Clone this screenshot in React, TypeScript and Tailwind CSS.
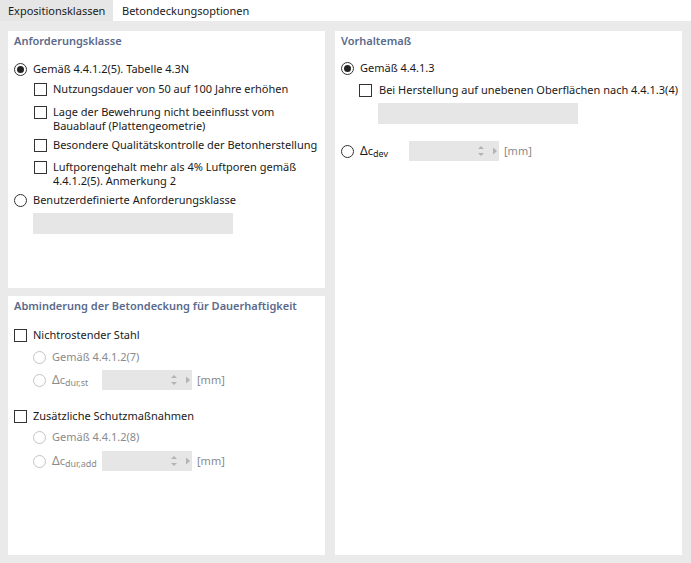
import React from "react";

const FONT = { fontFamily: '"Noto Sans", "Open Sans", sans-serif' };

function Radio({ checked = false, disabled = false }: { checked?: boolean; disabled?: boolean }) {
  return (
    <span
      className={`relative flex shrink-0 items-center justify-center w-[13px] h-[13px] rounded-full border bg-white ${
        disabled ? "border-[#c4c4c4]" : "border-[#333333]"
      }`}
    >
      {checked && <span className="w-[7px] h-[7px] rounded-full bg-[#222222]" />}
    </span>
  );
}

function Check({ disabled = false }: { disabled?: boolean }) {
  return (
    <span
      className={`block shrink-0 w-[13px] h-[13px] border bg-white ${
        disabled ? "border-[#c4c4c4]" : "border-[#333333]"
      }`}
    />
  );
}

function Spin({ w = 90 }: { w?: number }) {
  return (
    <div className="relative h-[20px] bg-[#e6e6e6] shrink-0" style={{ width: w }}>
      <svg className="absolute left-[68px] top-[4px]" width="8" height="12" viewBox="0 0 8 12">
        <path d="M1 4 L4 1 L7 4 Z" fill="#b3b3b3" />
        <path d="M1 8 L4 11 L7 8 Z" fill="#b3b3b3" />
      </svg>
      <svg className="absolute left-[83px] top-[6px]" width="6" height="8" viewBox="0 0 6 8">
        <path d="M1 0.5 L5 4 L1 7.5 Z" fill="#b3b3b3" />
      </svg>
    </div>
  );
}

function Delta({ sub, disabled = false }: { sub: string; disabled?: boolean }) {
  return (
    <span className={`inline-flex items-baseline ${disabled ? "text-[#8a8a8a]" : "text-[#1a1a1a]"}`}>
      <span className="text-[12px]">Δ</span>
      <span className="text-[11px]">c</span>
      <span className="text-[9px] relative top-[2px]">{sub}</span>
    </span>
  );
}

function Title({ children }: { children: React.ReactNode }) {
  return (
    <div className="h-[20px] flex items-center text-[11px] font-semibold text-[#5a6a8c] pl-[6px]">
      {children}
    </div>
  );
}

export default function App() {
  return (
    <div className="w-[691px] h-[563px] bg-white flex flex-col text-[11px] leading-[14px] text-[#1a1a1a]" style={FONT}>
      {/* Tabs */}
      <div className="h-[21px] flex shrink-0">
        <div className="w-[113px] bg-[#e6e6e6] flex items-center pl-[8px] text-[11px] text-[#1a1a1a]">
          Expositionsklassen
        </div>
        <div className="w-[145px] bg-white flex items-center pl-[9px] text-[11px] text-[#1a1a1a]">
          Betondeckungsoptionen
        </div>
      </div>

      {/* Body */}
      <div className="flex-1 bg-[#eaeaea] flex gap-[10px] pl-[8px] pr-[9px] pt-[10px] pb-[8px]">
        {/* Left column */}
        <div className="w-[317px] flex flex-col gap-[8px]">
          {/* Anforderungsklasse */}
          <div className="h-[257px] bg-white flex flex-col">
            <Title>Anforderungsklasse</Title>
            <div className="flex items-start gap-[6px] pl-[6px] mt-[11px]">
              <span className="mt-[1px] flex"><Radio checked /></span>
              <span>Gemäß 4.4.1.2(5). Tabelle 4.3N</span>
            </div>
            <div className="flex items-start gap-[6px] pl-[26px] mt-[6px]">
              <span className="mt-[1px] flex"><Check /></span>
              <span>Nutzungsdauer von 50 auf 100 Jahre erhöhen</span>
            </div>
            <div className="flex items-start gap-[6px] pl-[26px] mt-[9px]">
              <span className="mt-[1px] flex"><Check /></span>
              <span>
                Lage der Bewehrung nicht beeinflusst vom
                <br />
                Bauablauf (Plattengeometrie)
              </span>
            </div>
            <div className="flex items-start gap-[6px] pl-[26px] mt-[5px]">
              <span className="mt-[1px] flex"><Check /></span>
              <span>Besondere Qualitätskontrolle der Betonherstellung</span>
            </div>
            <div className="flex items-start gap-[6px] pl-[26px] mt-[8px]">
              <span className="mt-[1px] flex"><Check /></span>
              <span>
                Luftporengehalt mehr als 4% Luftporen gemäß
                <br />
                4.4.1.2(5). Anmerkung 2
              </span>
            </div>
            <div className="flex items-start gap-[6px] pl-[6px] mt-[5px]">
              <span className="mt-[1px] flex"><Radio /></span>
              <span>Benutzerdefinierte Anforderungsklasse</span>
            </div>
            <div className="ml-[25px] mt-[6px] w-[200px] h-[21px] bg-[#e6e6e6]" />
          </div>

          {/* Abminderung */}
          <div className="flex-1 bg-white flex flex-col">
            <Title>Abminderung der Betondeckung für Dauerhaftigkeit</Title>
            <div className="h-[20px] mt-[9px] flex items-center gap-[6px] pl-[6px]">
              <Check />
              <span>Nichtrostender Stahl</span>
            </div>
            <div className="h-[20px] mt-[2px] flex items-center gap-[6px] pl-[25px] text-[#8a8a8a]">
              <Radio disabled />
              <span>Gemäß 4.4.1.2(7)</span>
            </div>
            <div className="h-[20px] mt-[3px] flex items-center pl-[25px]">
              <Radio disabled />
              <span className="ml-[6px] w-[50px]"><Delta sub="dur,st" disabled /></span>
              <Spin />
              <span className="ml-[5px] text-[#8a8a8a]">[mm]</span>
            </div>
            <div className="h-[20px] mt-[16px] flex items-center gap-[6px] pl-[6px]">
              <Check />
              <span>Zusätzliche Schutzmaßnahmen</span>
            </div>
            <div className="h-[20px] mt-[1px] flex items-center gap-[6px] pl-[25px] text-[#8a8a8a]">
              <Radio disabled />
              <span>Gemäß 4.4.1.2(8)</span>
            </div>
            <div className="h-[20px] mt-[4px] flex items-center pl-[25px]">
              <Radio disabled />
              <span className="ml-[6px] w-[50px]"><Delta sub="dur,add" disabled /></span>
              <Spin />
              <span className="ml-[5px] text-[#8a8a8a]">[mm]</span>
            </div>
          </div>
        </div>

        {/* Right panel: Vorhaltemaß */}
        <div className="flex-1 bg-white flex flex-col">
          <Title>Vorhaltemaß</Title>
          <div className="h-[20px] mt-[7px] flex items-center gap-[6px] pl-[6px]">
            <Radio checked />
            <span>Gemäß 4.4.1.3</span>
          </div>
          <div className="h-[20px] mt-[2px] flex items-center gap-[7px] pl-[24px]">
            <Check />
            <span>Bei Herstellung auf unebenen Oberflächen nach 4.4.1.3(4)</span>
          </div>
          <div className="ml-[43px] mt-[3px] w-[200px] h-[21px] bg-[#e6e6e6]" />
          <div className="h-[20px] mt-[17px] flex items-center pl-[6px]">
            <Radio />
            <span className="ml-[6px] w-[49px]"><Delta sub="dev" /></span>
            <Spin />
            <span className="ml-[5px] text-[#8a8a8a]">[mm]</span>
          </div>
        </div>
      </div>
    </div>
  );
}
